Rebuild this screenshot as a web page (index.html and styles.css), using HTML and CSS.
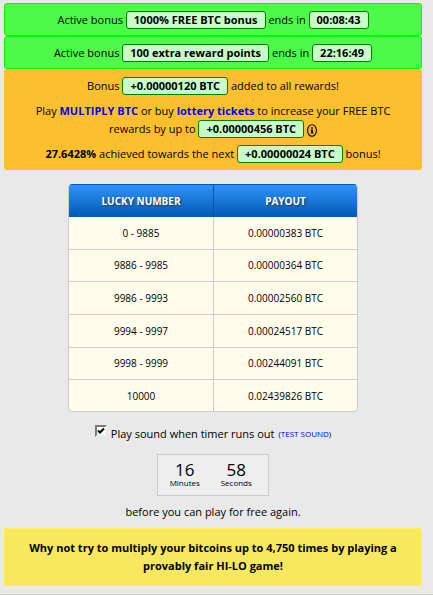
FILE: index.html
```
<!DOCTYPE html>
<html lang="en">
<head>
    <meta charset="UTF-8">
    <meta name="viewport" content="width=device-width, initial-scale=1.0">
    <title>Free BTC</title>
    <link rel="stylesheet" href="styles.css">
</head>
<body>
    <main>
        <div class="bonus active-bonus">
            Active bonus <span class="badge">1000% FREE BTC bonus</span> ends in <span class="badge">00:08:43</span>
        </div>
        <div class="bonus active-bonus">
            Active bonus <span class="badge">100 extra reward points</span> ends in <span class="badge">22:16:49</span>
        </div>
        <div class="bonus reward-bonus">
            <p>Bonus <span class="badge">+0.00000120 BTC</span> added to all rewards!</p>
            <p>Play <a href="#">MULTIPLY BTC</a> or buy <a href="#">lottery tickets</a> to increase your FREE BTC rewards by up to <span class="badge">+0.00000456 BTC</span>
                <svg class="info" viewBox="0 0 10 13" role="img" aria-label="Info">
                    <ellipse cx="5" cy="6.5" rx="4.4" ry="5.8" fill="none" stroke="#000" stroke-width="1.1"/>
                    <path d="M4.2 3.2h1.7v1.5H4.2zM3.6 5.4h2.3v3.2h.7v1H3.6v-1h.6V6.4h-.6z"/>
                </svg>
            </p>
            <p><b>27.6428%</b> achieved towards the next <span class="badge">+0.00000024 BTC</span> bonus!</p>
        </div>

        <table class="payouts">
            <thead>
                <tr><th>LUCKY NUMBER</th><th>PAYOUT</th></tr>
            </thead>
            <tbody>
                <tr><td>0 - 9885</td><td>0.00000383 BTC</td></tr>
                <tr><td>9886 - 9985</td><td>0.00000364 BTC</td></tr>
                <tr><td>9986 - 9993</td><td>0.00002560 BTC</td></tr>
                <tr><td>9994 - 9997</td><td>0.00024517 BTC</td></tr>
                <tr><td>9998 - 9999</td><td>0.00244091 BTC</td></tr>
                <tr><td>10000</td><td>0.02439826 BTC</td></tr>
            </tbody>
        </table>

        <div class="sound">
            <input type="checkbox" id="sound" checked>
            <label for="sound">Play sound when timer runs out</label>
            <small>(<a href="#">TEST SOUND</a>)</small>
        </div>

        <div class="timer">
            <div class="timer-part"><span class="amount">16</span><span class="period">Minutes</span></div>
            <div class="timer-part"><span class="amount">58</span><span class="period">Seconds</span></div>
        </div>
        <p class="again">before you can play for free again.</p>

        <div class="promo">Why not try to multiply your bitcoins up to 4,750 times by playing a provably fair HI-LO game!</div>
    </main>
    <footer></footer>
</body>
</html>
```

FILE: styles.css
```
* {
    box-sizing: border-box;
}

body {
    margin: 0;
    background: #e9e9e9;
    color: #000;
    font-family: "Open Sans", sans-serif;
    font-size: 11px;
    line-height: 18px;
    text-align: center;
}

main {
    padding: 3px 11px 8px 4px;
}

p {
    margin: 0;
}

a {
    color: #00f;
    text-decoration: none;
}

.bonus {
    border-radius: 3px;
}

.active-bonus {
    padding: 7px 16px 6px;
    border: 1px solid #0f0;
    background: #4dfa4a;
}

.reward-bonus {
    display: flex;
    flex-direction: column;
    gap: 7px;
    padding: 8px 24px 7px;
    background: #fcc02e;
}

.reward-bonus a {
    font-weight: bold;
}

.badge {
    display: inline-block;
    padding: 0 7px;
    border: 1px solid #008000;
    border-radius: 3px;
    background: #c8ffc8;
    font-weight: bold;
    line-height: 16px;
}

.info {
    width: 10px;
    height: 13px;
    vertical-align: -4px;
}

.payouts {
    width: 290px;
    height: 228px;
    margin: 14px auto 0;
    border: 1px solid #ccc;
    border-top: 0;
    border-radius: 4px;
    border-spacing: 0;
    overflow: hidden;
    table-layout: fixed;
    background: #fffceb;
    line-height: 16px;
}

.payouts th {
    height: 33px;
    padding: 0;
    border-top: 1px solid #0057b0;
    background: linear-gradient(#3093f8, #0059b5);
    color: #fff;
    font-size: 10px;
    text-shadow: 1px 1px 2px #333;
}

.payouts td {
    padding: 0;
    border-bottom: 1px solid #ccc;
    font-size: 10px;
}

.payouts td + td {
    border-left: 1px solid #ccc;
}

.payouts th + th {
    border-left: 1px solid #0057b0;
}

.payouts tr:last-child td {
    border-bottom: 0;
}

.sound {
    display: flex;
    justify-content: center;
    gap: 4px;
    margin-top: 13px;
}

.sound input {
    appearance: none;
    width: 12px;
    height: 12px;
    margin: 0;
    border: 2px solid;
    border-color: #777 #eee #eee #777;
    background: #fff;
}

.sound input:checked {
    background: #fff url("data:image/svg+xml,%3Csvg xmlns='http://www.w3.org/2000/svg' viewBox='0 0 8 8'%3E%3Cpath d='M1 3.5l2 2 4-4' fill='none' stroke='%23000' stroke-width='2'/%3E%3C/svg%3E") center / 8px no-repeat;
}

.sound small {
    font-size: 8px;
}

.timer {
    display: flex;
    justify-content: space-around;
    width: 112px;
    margin: 11px auto 0;
    padding: 7px 6px 7px 1px;
    border: 1px solid #ccc;
    background: #eee;
}

.timer-part {
    display: flex;
    flex-direction: column;
    width: 52px;
}

.amount {
    font-size: 17px;
    line-height: 16px;
}

.period {
    font-size: 8px;
    line-height: 10px;
}

.again {
    margin-top: 7px;
}

.promo {
    margin-top: 7px;
    padding: 10px 20px;
    border: 1px solid #fff060;
    background: #f8e85f;
    font-weight: bold;
}

footer {
    border-top: 1px solid #ccccc4;
}
```
